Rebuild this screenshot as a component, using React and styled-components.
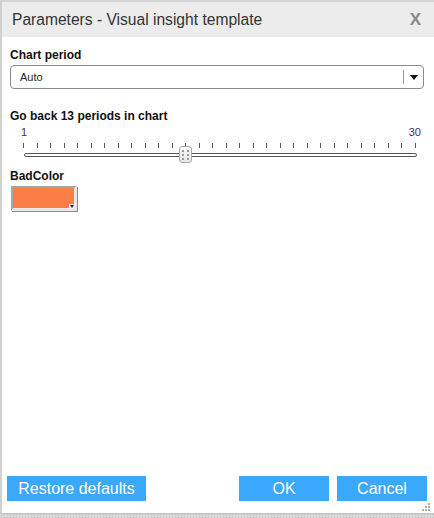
import React, { useState } from "react";
import styled, { createGlobalStyle } from "styled-components";

const GlobalStyle = createGlobalStyle`
  body {
    margin: 0;
    font-family: "Liberation Sans", Arial, sans-serif;
  }
`;

const Page = styled.div`
  width: 434px;
  height: 518px;
  background-color: #d6d6d6;
  background-image: radial-gradient(#bdbdbd 1px, transparent 1px);
  background-size: 3px 3px;
  overflow: hidden;
`;

const Dialog = styled.div`
  box-sizing: border-box;
  width: 434px;
  height: 514px;
  background: #fff;
  border-top: 2px solid #d4d4d4;
  border-left: 2px solid #d0d0d0;
  border-bottom: 1px solid #c4c4c4;
  display: flex;
  flex-direction: column;
  position: relative;
`;

const Header = styled.div`
  height: 35px;
  background: #ececec;
  display: flex;
  align-items: center;
  justify-content: space-between;
  padding: 0 13px 0 10px;
`;

const Title = styled.div`
  font-size: 15.6px;
  color: #333;
`;

const Close = styled.div`
  font-size: 17px;
  font-weight: bold;
  color: #8a8a8a;
  font-family: "Liberation Sans", Arial, sans-serif;
`;

const Body = styled.div`
  flex: 1;
  padding: 11px 8px 0 8px;
  display: flex;
  flex-direction: column;
`;

const Label = styled.div`
  font-size: 12px;
  font-weight: bold;
  color: #111;
  margin-bottom: ${(p) => p.mb || 3}px;
`;

const Select = styled.div`
  box-sizing: border-box;
  height: 24px;
  width: 414px;
  border: 1px solid #8a8a8a;
  border-radius: 4px;
  display: flex;
  align-items: center;
  font-size: 11px;
  color: #222;
  margin-bottom: 20px;
`;

const SelectText = styled.div`
  flex: 1;
  padding-left: 9px;
`;

const SelectArrow = styled.div`
  width: 19px;
  height: 14px;
  border-left: 1px solid #9a9a9a;
  display: flex;
  align-items: center;
  justify-content: center;
  &::after {
    content: "";
    border-left: 4px solid transparent;
    border-right: 4px solid transparent;
    border-top: 5px solid #111;
  }
`;

const SliderWrap = styled.div`
  width: 393px;
  margin-left: 13px;
  position: relative;
  height: 38px;
  margin-bottom: 5px;
`;

const Ends = styled.div`
  display: flex;
  justify-content: space-between;
  font-size: 11px;
  color: #4a2a55;
  margin-left: -2px;
  margin-right: -5px;
  height: 12px;
`;

const Ticks = styled.div`
  display: flex;
  justify-content: space-between;
  height: 5px;
  margin-top: 5px;
`;

const Tick = styled.div`
  width: 1px;
  height: 5px;
  background: #555;
`;

const Track = styled.div`
  box-sizing: border-box;
  height: 4px;
  margin-top: 5px;
  border: 1px solid #555;
  border-radius: 2px;
  background: #fff;
  width: 393px;
  margin-left: 1px;
`;

const Thumb = styled.div`
  position: absolute;
  top: 20px;
  width: 13px;
  height: 17px;
  box-sizing: border-box;
  border: 1px solid #aaa;
  border-radius: 3px;
  background: linear-gradient(#fafafa, #e6e6e6);
  display: grid;
  grid-template-columns: 2px 2px;
  gap: 2px 3px;
  align-content: center;
  justify-content: center;
`;

const Dot = styled.span`
  width: 2px;
  height: 2px;
  background: #999;
`;

const Swatch = styled.div`
  box-sizing: border-box;
  width: 66px;
  height: 25px;
  margin-left: 1px;
  background: ${(p) => p.color};
  border-top: 2px solid #a6a6a6;
  border-left: 2px solid #a6a6a6;
  border-right: 3px solid #e8e8e8;
  border-bottom: 3px solid #e8e8e8;
  box-shadow: 1px 1px 0 #8c8c8c;
  position: relative;
`;

const SwatchArrow = styled.div`
  position: absolute;
  right: -1px;
  bottom: -1px;
  width: 6px;
  height: 5px;
  background: #eee;
  display: flex;
  align-items: center;
  justify-content: center;
  &::after {
    content: "";
    border-left: 2px solid transparent;
    border-right: 2px solid transparent;
    border-top: 3px solid #222;
  }
`;

const Footer = styled.div`
  display: flex;
  padding: 0 5px 12px 5px;
  gap: 8px;
`;

const Button = styled.button`
  height: 25px;
  width: ${(p) => p.w}px;
  margin-right: ${(p) => p.mr || 0}px;
  background: #3aa8fb;
  color: #fff;
  border: none;
  font-family: "Liberation Sans", Arial, sans-serif;
  font-size: 16px;
  padding: 0;
  cursor: pointer;
`;

const Grip = styled.svg`
  position: absolute;
  right: 3px;
  bottom: 1px;
`;

export default function App() {
  const [value] = useState(13);
  const ticks = Array.from({ length: 30 }, (_, i) => i);
  const thumbLeft = 1 + ((value - 1) / 29) * 392 - 7;

  return (
    <Page>
      <GlobalStyle />
      <Dialog>
        <Header>
          <Title>Parameters - Visual insight template</Title>
          <Close>X</Close>
        </Header>
        <Body>
          <Label>Chart period</Label>
          <Select>
            <SelectText>Auto</SelectText>
            <SelectArrow />
          </Select>

          <Label mb={3}>Go back {value} periods in chart</Label>
          <SliderWrap>
            <Ends>
              <span>1</span>
              <span>30</span>
            </Ends>
            <Ticks>
              {ticks.map((t) => (
                <Tick key={t} />
              ))}
            </Ticks>
            <Track />
            <Thumb style={{ left: thumbLeft }}>
              <Dot />
              <Dot />
              <Dot />
              <Dot />
              <Dot />
              <Dot />
            </Thumb>
          </SliderWrap>

          <Label mb={3}>BadColor</Label>
          <Swatch color="#fc7e44">
            <SwatchArrow />
          </Swatch>
        </Body>
        <Footer>
          <Button w={139} mr={85}>Restore defaults</Button>
          <Button w={90}>OK</Button>
          <Button w={90}>Cancel</Button>
        </Footer>
        <Grip width="10" height="9" viewBox="0 0 10 9">
          <rect x="7" y="0" width="2" height="2" fill="#b5ad9c" />
          <rect x="4" y="3" width="2" height="2" fill="#b5ad9c" />
          <rect x="7" y="3" width="2" height="2" fill="#b5ad9c" />
          <rect x="1" y="6" width="2" height="2" fill="#b5ad9c" />
          <rect x="4" y="6" width="2" height="2" fill="#b5ad9c" />
          <rect x="7" y="6" width="2" height="2" fill="#b5ad9c" />
        </Grip>
      </Dialog>
    </Page>
  );
}
